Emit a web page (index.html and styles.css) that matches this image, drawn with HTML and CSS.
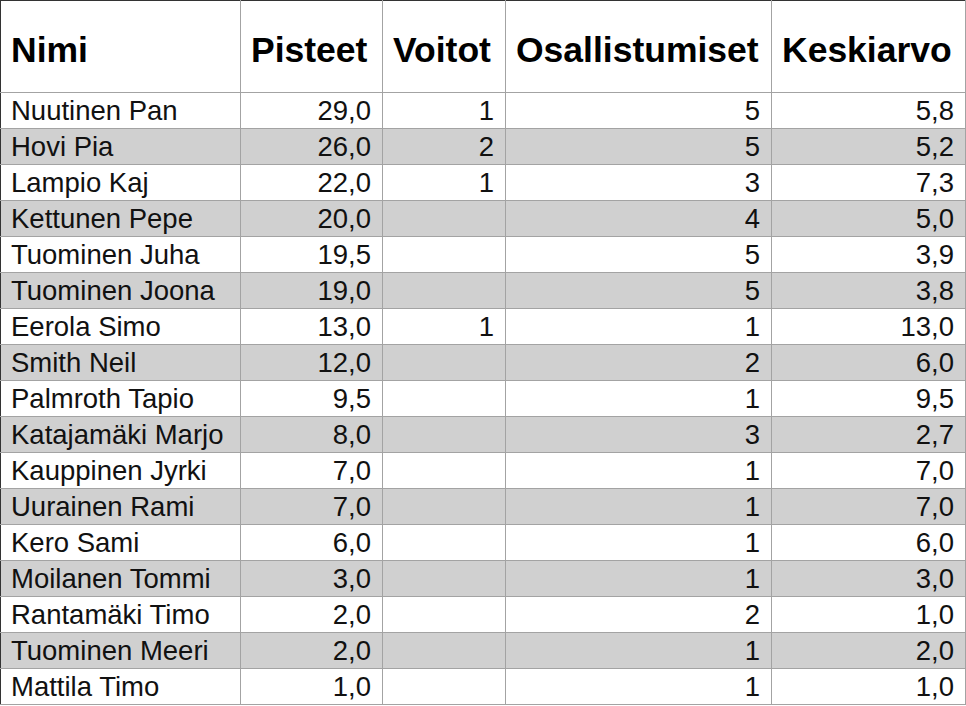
FILE: index.html
```html
<!DOCTYPE html>
<html lang="fi">
<head>
<meta charset="utf-8">
<title>Tulokset</title>
<link rel="stylesheet" href="styles.css">
</head>
<body>
<table class="results">
  <colgroup>
    <col class="c-name">
    <col class="c-pts">
    <col class="c-wins">
    <col class="c-part">
    <col class="c-avg">
  </colgroup>
  <thead>
    <tr>
      <th class="left">Nimi</th>
      <th>Pisteet</th>
      <th>Voitot</th>
      <th>Osallistumiset</th>
      <th>Keskiarvo</th>
    </tr>
  </thead>
  <tbody>
    <tr><td>Nuutinen Pan</td><td>29,0</td><td>1</td><td>5</td><td>5,8</td></tr>
    <tr><td>Hovi Pia</td><td>26,0</td><td>2</td><td>5</td><td>5,2</td></tr>
    <tr><td>Lampio Kaj</td><td>22,0</td><td>1</td><td>3</td><td>7,3</td></tr>
    <tr><td>Kettunen Pepe</td><td>20,0</td><td></td><td>4</td><td>5,0</td></tr>
    <tr><td>Tuominen Juha</td><td>19,5</td><td></td><td>5</td><td>3,9</td></tr>
    <tr><td>Tuominen Joona</td><td>19,0</td><td></td><td>5</td><td>3,8</td></tr>
    <tr><td>Eerola Simo</td><td>13,0</td><td>1</td><td>1</td><td>13,0</td></tr>
    <tr><td>Smith Neil</td><td>12,0</td><td></td><td>2</td><td>6,0</td></tr>
    <tr><td>Palmroth Tapio</td><td>9,5</td><td></td><td>1</td><td>9,5</td></tr>
    <tr><td>Katajamäki Marjo</td><td>8,0</td><td></td><td>3</td><td>2,7</td></tr>
    <tr><td>Kauppinen Jyrki</td><td>7,0</td><td></td><td>1</td><td>7,0</td></tr>
    <tr><td>Uurainen Rami</td><td>7,0</td><td></td><td>1</td><td>7,0</td></tr>
    <tr><td>Kero Sami</td><td>6,0</td><td></td><td>1</td><td>6,0</td></tr>
    <tr><td>Moilanen Tommi</td><td>3,0</td><td></td><td>1</td><td>3,0</td></tr>
    <tr><td>Rantamäki Timo</td><td>2,0</td><td></td><td>2</td><td>1,0</td></tr>
    <tr><td>Tuominen Meeri</td><td>2,0</td><td></td><td>1</td><td>2,0</td></tr>
    <tr><td>Mattila Timo</td><td>1,0</td><td></td><td>1</td><td>1,0</td></tr>
  </tbody>
</table>
</body>
</html>
```

FILE: styles.css
```css
html, body {
  margin: 0;
  padding: 0;
  background: #ffffff;
}

.results {
  border-collapse: collapse;
  table-layout: fixed;
  width: 965px;
  font-family: "Liberation Sans", Arial, Helvetica, sans-serif;
  color: #111111;
  border-top: 1px solid #333333;
  border-left: 1px solid #333333;
}

.c-name { width: 240px; }
.c-pts { width: 142px; }
.c-wins { width: 123px; }
.c-part { width: 266px; }
.c-avg { width: 194px; }

.results th,
.results td {
  border: 1px solid #a3a3a3;
  white-space: nowrap;
  overflow: hidden;
}

.results th {
  height: 83px;
  padding: 8px 10px 0 10px;
  font-size: 35.5px;
  font-weight: bold;
  text-align: left;
  vertical-align: middle;
  color: #000000;
}

.results thead tr th:first-child,
.results tbody tr td:first-child {
  border-left: 1px solid #333333;
}

.results thead th {
  border-top: 1px solid #333333;
}

.results td {
  height: 35px;
  padding: 0 11px 0 10px;
  font-size: 27.5px;
  line-height: 35px;
  text-align: right;
  vertical-align: middle;
}

.results td:first-child {
  text-align: left;
}

.results tbody tr:nth-child(even) td {
  background: #d0d0d0;
}
```
